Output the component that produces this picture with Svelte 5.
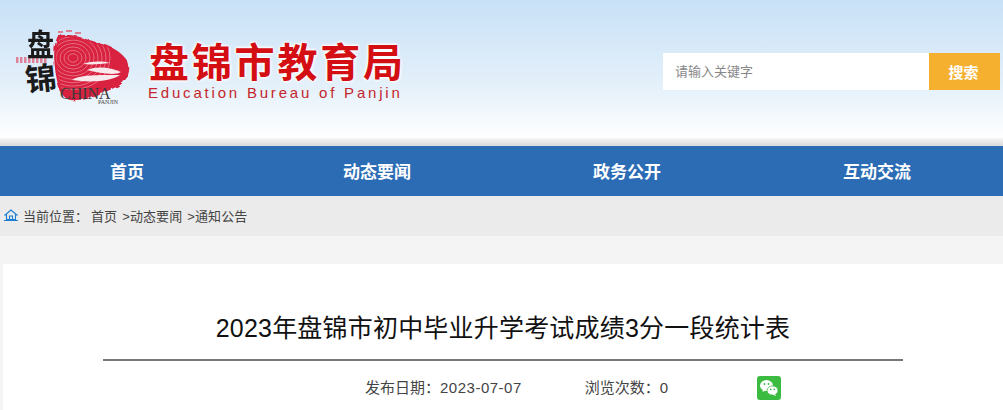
<script>
  const nav = ['首页', '动态要闻', '政务公开', '互动交流'];
  const rings = [5, 9, 13, 17, 21, 25, 29, 33, 37];
  const dots = [3, 7, 11, 15, 19, 23, 27, 31];
</script>

<div class="page">
  <header class="top">
    <div class="brand">
      <svg class="logo" width="120" height="90" viewBox="0 0 120 90" aria-hidden="true">
        <defs>
          <filter id="rough" x="-10%" y="-10%" width="120%" height="120%">
            <feTurbulence type="fractalNoise" baseFrequency="0.12" numOctaves="2" seed="4" />
            <feDisplacementMap in="SourceGraphic" scale="5" />
            <feGaussianBlur stdDeviation="0.6" />
          </filter>
          <filter id="soft">
            <feGaussianBlur stdDeviation="0.4" />
          </filter>
          <clipPath id="blob">
            <path d="M46 10 C56 7 68 12 82 16 C96 18 106 26 112 34 C115 44 110 54 100 58 C90 62 80 70 62 70 C54 71 48 64 46 56 C42 40 40 20 46 10Z" />
          </clipPath>
        </defs>
        <g filter="url(#rough)">
          <path d="M44 8 C56 4 68 10 82 14 C96 16 108 24 114 34 C118 44 112 56 100 60 C90 64 80 72 62 72 C52 74 46 66 44 56 C40 40 38 18 44 8Z" fill="#d8213f" />
        </g>
        <g clip-path="url(#blob)" filter="url(#soft)" fill="none" stroke="#f3a9b6" stroke-width="1" opacity="0.55">
          {#each rings as r}
            <ellipse cx="59" cy="30" rx={r} ry={r * 0.85} />
          {/each}
        </g>
        <g fill="#e2566e" opacity="0.7" filter="url(#soft)">
          {#each dots as d}
            <rect x={d - 1} y="29" width="2.5" height="6" />
          {/each}
          <rect x="44" y="3" width="5" height="2" />
          <rect x="52" y="2" width="6" height="2" />
          <rect x="61" y="4" width="6" height="2" />
        </g>
        <g fill="#f8eaec" filter="url(#soft)">
          <path d="M69 36 C78 33 88 33 96 35 C86 36 78 37 69 36Z" />
          <path d="M73 42 C84 37 98 40 107 44 C100 48 86 45 73 42Z" />
          <path d="M58 52 C66 46 90 47 106 47 C98 53 78 55 58 52Z" />
        </g>
      </svg>
      <span class="seal seal-a">盘</span>
      <span class="seal seal-b">锦</span>
      <span class="china">CHINA</span>
      <span class="panjin">PANJIN</span>
      <div class="names">
        <div class="cn">盘锦市教育局</div>
        <div class="en">Education Bureau of Panjin</div>
      </div>
    </div>
    <div class="search">
      <input type="text" placeholder="请输入关键字" />
      <button type="button">搜索</button>
    </div>
  </header>

  <div class="strip"></div>

  <nav class="nav">
    {#each nav as item}
      <a href="#top">{item}</a>
    {/each}
  </nav>

  <div class="crumbs">
    <svg width="14" height="12" viewBox="0 0 14 12" aria-hidden="true">
      <path d="M0.5 6.5 L7 1 L13.5 6.5 M2.5 5.5 V10.5 H11.5 V5.5 M5.5 10.5 V7 H8.5 V10.5 M0 11.5 H14" fill="none" stroke="#1a7fd4" stroke-width="1.1" />
    </svg>
    <span class="here">当前位置：</span>
    <span class="links">首页 &gt;动态要闻 &gt;通知公告</span>
  </div>

  <main class="card">
    <h1>2023年盘锦市初中毕业升学考试成绩3分一段统计表</h1>
    <div class="meta">
      <span class="date">发布日期：<span class="num">2023-07-07</span></span>
      <span class="views">浏览次数：0</span>
      <svg class="wx" width="24" height="24" viewBox="0 0 24 24" aria-hidden="true">
        <rect width="24" height="24" rx="3" fill="#3cbb41" />
        <ellipse cx="9.5" cy="9.5" rx="6.5" ry="5.4" fill="#fff" />
        <path d="M6 13 L5.5 16 L9 14Z" fill="#fff" />
        <ellipse cx="15.5" cy="14.5" rx="5.5" ry="4.6" fill="#fff" stroke="#3cbb41" stroke-width="0.8" />
        <path d="M18 18 L19 20 L15.5 18.5Z" fill="#fff" />
        <circle cx="7.5" cy="8" r="0.9" fill="#3cbb41" />
        <circle cx="11.5" cy="8" r="0.9" fill="#3cbb41" />
        <circle cx="13.7" cy="13.4" r="0.8" fill="#3cbb41" />
        <circle cx="17.3" cy="13.4" r="0.8" fill="#3cbb41" />
      </svg>
    </div>
  </main>
</div>

<style>
  :global(body) {
    margin: 0;
    background: #f4f4f4;
    font-family: "Liberation Sans", "Noto Sans CJK SC", sans-serif;
    overflow: hidden;
  }

  .page {
    height: 410px;
    overflow: hidden;
  }

  .top {
    height: 138px;
    display: flex;
    justify-content: space-between;
    box-sizing: border-box;
    padding: 53px 3px 0 0;
    background: linear-gradient(#c8e1f7, #e4f0fa 62%, #fff);
  }

  .brand {
    position: relative;
    height: 60px;
  }

  .logo {
    position: absolute;
    left: 14px;
    top: -25px;
  }

  .seal {
    position: absolute;
    font-family: "Noto Sans CJK SC", sans-serif;
    font-weight: 700;
    line-height: 30px;
    color: #1b1b1b;
  }

  .seal-a { left: 27px; top: -25px; font-size: 27px; transform: scaleY(1.15); }
  .seal-b { left: 25px; top: 9px; font-size: 31px; transform: rotate(-6deg); }

  .china {
    position: absolute;
    left: 60px;
    top: 33px;
    font-family: "Liberation Serif", serif;
    font-size: 16px;
    line-height: 16px;
    color: #3a3a3a;
  }

  .panjin {
    position: absolute;
    left: 98px;
    top: 46px;
    font-family: "Liberation Serif", serif;
    font-size: 6px;
    color: #444;
  }

  .names {
    margin: -17px 0 0 149px;
    width: 260px;
  }

  .cn {
    font-family: "Noto Sans CJK SC", sans-serif;
    font-weight: 700;
    font-size: 40px;
    line-height: 48px;
    letter-spacing: 2.8px;
    color: #d40f14;
    white-space: nowrap;
    text-shadow: 0 0 2px #fff, 0 0 3px #fff, 0 0 3px #fff, 0 0 4px #fff;
  }

  .en {
    margin-left: -1px;
    font-size: 15px;
    line-height: 18px;
    letter-spacing: 2.8px;
    color: #c4262c;
    white-space: nowrap;
  }

  .search {
    display: flex;
    height: 37px;
  }

  .search input {
    width: 266px;
    height: 37px;
    box-sizing: border-box;
    padding: 0 12px;
    border: 0;
    outline: 0;
    background: #fff;
    font-family: inherit;
    font-size: 13px;
  }

  .search input::placeholder {
    color: #888;
    opacity: 1;
  }

  .search button {
    width: 71px;
    padding: 0 2px 0 0;
    border: 0;
    background: #f5b02f;
    color: #fff;
    font-family: inherit;
    font-size: 15px;
    font-weight: 700;
  }

  .strip {
    height: 8px;
    background: linear-gradient(#f6f6f6, #d9d9d9);
  }

  .nav {
    height: 50px;
    display: grid;
    grid-template-columns: repeat(4, 250px);
    padding-left: 2px;
    background: #2b6cb5;
  }

  .nav a {
    line-height: 53px;
    text-align: center;
    color: #fff;
    font-size: 17px;
    font-weight: 700;
    text-decoration: none;
  }

  .crumbs {
    height: 40px;
    display: flex;
    align-items: center;
    padding: 0 0 2px 4px;
    box-sizing: border-box;
    background: #ebebeb;
    font-size: 13px;
    color: #444;
  }

  .here {
    margin-left: 5px;
    width: 68px;
  }

  .links {
    word-spacing: 1.3px;
    letter-spacing: 0.1px;
  }

  .card {
    margin: 28px 0 0 3px;
    height: 146px;
    background: #fff;
    text-align: center;
  }

  .card h1 {
    width: 800px;
    height: 97px;
    margin: 0 auto;
    box-sizing: border-box;
    padding-top: 46px;
    border-bottom: 2px solid #777;
    font-size: 25px;
    letter-spacing: 0.2px;
    line-height: 36px;
    font-weight: 400;
    color: #111;
    white-space: nowrap;
  }

  .meta {
    width: 800px;
    margin: 0 auto;
    padding-top: 15px;
    display: flex;
    align-items: center;
    font-size: 15px;
    line-height: 24px;
    color: #444;
  }

  .num { letter-spacing: 0.5px; }
  .date { margin-left: 262px; }
  .views { margin-left: 63px; }
  .wx { margin-left: 89px; }
</style>
